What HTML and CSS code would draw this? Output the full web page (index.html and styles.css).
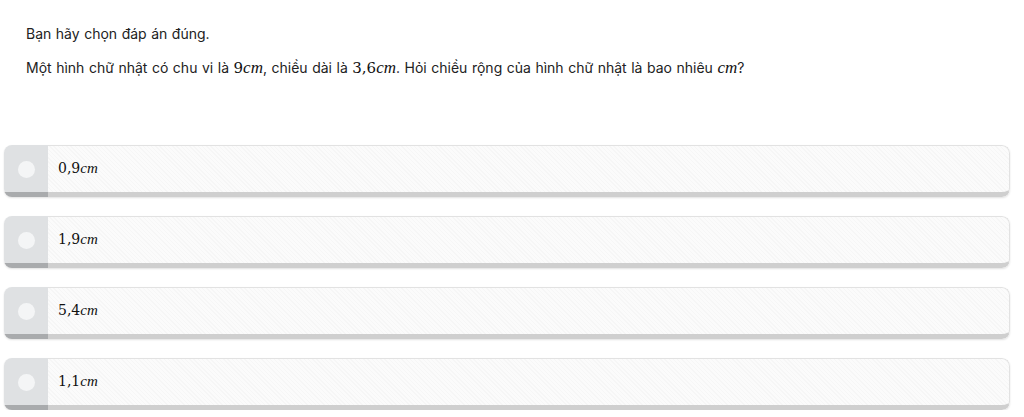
FILE: index.html
```html
<!DOCTYPE html>
<html lang="vi">
<head>
  <meta charset="UTF-8" />
  <title>Câu hỏi</title>
  <link rel="stylesheet" href="styles.css">
</head>
<body>
  <div class="question">
    <p>Bạn hãy chọn đáp án đúng.</p>
    <p>Một hình chữ nhật có chu vi là <span class="math">9<i>cm</i></span>, chiều dài là <span class="math">3,6<i>cm</i></span>. Hỏi chiều rộng của hình chữ nhật là bao nhiêu <span class="math"><i>cm</i></span>?</p>
  </div>

  <div class="answers">
    <div class="answer">
      <div class="answer-radio"><span class="dot"></span></div>
      <div class="answer-text"><span class="math">0,9<i>cm</i></span></div>
    </div>
    <div class="answer">
      <div class="answer-radio"><span class="dot"></span></div>
      <div class="answer-text"><span class="math">1,9<i>cm</i></span></div>
    </div>
    <div class="answer">
      <div class="answer-radio"><span class="dot"></span></div>
      <div class="answer-text"><span class="math">5,4<i>cm</i></span></div>
    </div>
    <div class="answer">
      <div class="answer-radio"><span class="dot"></span></div>
      <div class="answer-text"><span class="math">1,1<i>cm</i></span></div>
    </div>
  </div>
</body>
</html>
```

FILE: styles.css
```css
/* Page */
body {
  margin: 0;
  padding: 0 14px 0 4px;
  font-family: Inter, "Noto Sans", sans-serif;
  font-size: 14px;
  color: #222;
  background: #fff;
}

/* Question */
.question {
  padding: 25px 0 0 22px;
}

.question p {
  margin: 0 0 17px;
  line-height: 17px;
  word-spacing: 0.6px;
}

.math {
  font-family: "DejaVu Serif", "Liberation Serif", serif;
  font-size: 15px;
  line-height: 1;
  color: #111;
  word-spacing: 0;
}

.math i {
  font-style: italic;
  font-family: "Liberation Serif", serif;
  font-size: 17px;
}

/* Answers */
.answers {
  margin-top: 69px;
  display: flex;
  flex-direction: column;
  gap: 19px;
}

.answer {
  display: flex;
  height: 52px;
  box-sizing: border-box;
  border-radius: 8px;
  overflow: hidden;
  box-shadow: 0 1px 2px rgba(0, 0, 0, 0.12);
}

.answer-radio {
  width: 44px;
  background: #dfe1e3;
  border-bottom: 5px solid #a9abad;
  display: flex;
  align-items: center;
  justify-content: center;
  padding-top: 1px;
}

.dot {
  width: 17px;
  height: 17px;
  border-radius: 50%;
  background: #f4f5f6;
}

.answer-text {
  flex: 1;
  display: flex;
  align-items: center;
  padding: 0 0 1px 10px;
  border: 1px solid #e2e2e2;
  border-left: none;
  border-bottom: 5px solid #cfcfcf;
  border-radius: 0 8px 8px 0;
  background-color: #fbfbfb;
  background-image: repeating-linear-gradient(45deg, #f6f6f6 0 1px, transparent 1px 3px);
}

.answer-text .math {
  font-size: 14px;
}

.answer-text .math i {
  font-size: 15px;
}
```
